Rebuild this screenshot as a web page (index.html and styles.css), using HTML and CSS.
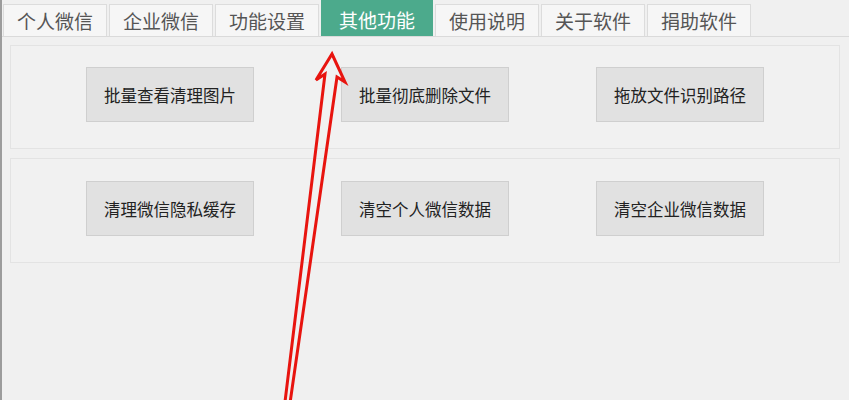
FILE: index.html
```html
<!DOCTYPE html>
<html lang="zh-CN">
<head>
    <meta charset="UTF-8">
    <meta name="viewport" content="width=device-width, initial-scale=1.0">
    <title>其他功能</title>
    <link rel="stylesheet" href="styles.css">
</head>
<body>
    <div class="window">
        <div class="tabs">
            <div class="tab">个人微信</div>
            <div class="tab">企业微信</div>
            <div class="tab">功能设置</div>
            <div class="tab tab-active">其他功能</div>
            <div class="tab">使用说明</div>
            <div class="tab">关于软件</div>
            <div class="tab">捐助软件</div>
        </div>
        <div class="panel">
            <div class="group">
                <button class="btn">批量查看清理图片</button>
                <button class="btn">批量彻底删除文件</button>
                <button class="btn">拖放文件识别路径</button>
            </div>
            <div class="group">
                <button class="btn">清理微信隐私缓存</button>
                <button class="btn">清空个人微信数据</button>
                <button class="btn">清空企业微信数据</button>
            </div>
        </div>

        <!-- 标注箭头 -->
        <svg class="arrow" width="849" height="400" viewBox="0 0 849 400">
            <polygon points="332,54 345,82 337,77 289,410 284,410 325,74 316,80"
                     fill="none" stroke="#e8140f" stroke-width="3" stroke-linejoin="miter"/>
        </svg>
    </div>
</body>
</html>
```

FILE: styles.css
```css
body {
    margin: 0;
    background-color: #f0f0f0;
    font-family: "Noto Sans CJK SC", "Noto Sans", sans-serif;
}

.window {
    position: relative;
    height: 400px;
    overflow: hidden;
    border-left: 2px solid #9c9c9c;
    box-sizing: border-box;
}

.tabs {
    display: flex;
    align-items: flex-end;
    gap: 2px;
    height: 36px;
    padding-left: 1px;
}

.tab {
    height: 32px;
    line-height: 31px;
    padding: 0 13px;
    font-size: 19px;
    color: #555;
    background: #f6f6f6;
    border: 1px solid #dcdcdc;
    border-bottom: none;
    box-sizing: border-box;
}

.tab-active {
    height: 36px;
    line-height: 37px;
    padding: 0 17px;
    background: #4caa8c;
    border-color: #4caa8c;
    color: #fff;
}

.panel {
    border-top: 1px solid #dadada;
    padding: 8px 9px 0 8px;
    display: flex;
    flex-direction: column;
    gap: 9px;
}

.group {
    display: flex;
    justify-content: center;
    gap: 87px;
    padding: 21px 0 26px;
    border: 1px solid #e3e3e3;
    background: #f1f1f1;
}

.group + .group {
    padding: 22px 0 26px;
}

.btn {
    width: 168px;
    height: 55px;
    font-family: inherit;
    font-size: 16.5px;
    color: #222;
    background: #e1e1e1;
    border: 1px solid #cfcfcf;
    padding: 0;
}

.arrow {
    position: absolute;
    left: -2px;
    top: 0;
    pointer-events: none;
}
```
